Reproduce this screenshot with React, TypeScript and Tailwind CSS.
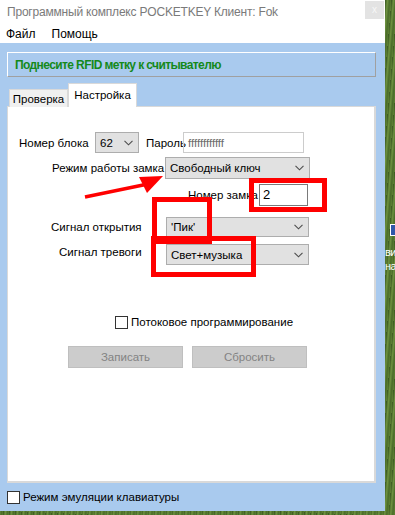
import React from "react";

function Chevron() {
  return (
    <svg width="9" height="6" viewBox="0 0 9 6" className="shrink-0">
      <polyline points="0.5,0.8 4.5,4.8 8.5,0.8" fill="none" stroke="#4d4d4d" strokeWidth="1.1" />
    </svg>
  );
}

function Select({ value, className }: { value: string; className: string }) {
  return (
    <div className={`flex shrink-0 items-center justify-between border border-[#adadad] bg-[#e1e1e1] pl-[4px] pr-[5px] text-black ${className}`}>
      <span className="whitespace-nowrap">{value}</span>
      <Chevron />
    </div>
  );
}

function Box() {
  return <div className="h-[13px] w-[13px] shrink-0 border border-[#333333] bg-white" />;
}

export default function App() {
  return (
    <div className="relative flex h-[515px] w-[395px] overflow-hidden whitespace-nowrap bg-[repeating-linear-gradient(95deg,#3d5c22_0px,#6e9240_2px,#4b6d2a_4px,#5c7f33_6px)] font-['Liberation_Sans',Arial,sans-serif] text-[11.5px] leading-[14px]">
      {/* Window */}
      <div className="flex h-[511px] w-[385px] shrink-0 flex-col bg-[#a9caee]">
        {/* Title bar */}
        <div className="flex h-[23px] items-start bg-white">
          <span className="pl-[7px] pt-[5px] text-[12px] tracking-[-0.2px] text-[#7a7a7a]">Программный комплекс POCKETKEY Клиент: Fok</span>
          <div className="ml-auto mr-[1px] mt-[1px] flex h-[18px] w-[19px] items-center justify-center bg-[#e3e3e3] text-[10px] text-[#f7f7f7]">
            x
          </div>
        </div>
        {/* Menu */}
        <div className="flex h-[20px] items-start gap-[16px] bg-white pl-[6px] pt-[4px] text-[12px] text-black">
          <span>Файл</span>
          <span>Помощь</span>
        </div>

        {/* Body */}
        <div className="flex flex-1 flex-col pl-[7px] pr-[9px] pt-[9px]">
          <div className="flex h-[25px] items-center border border-b-[#a0a0a0] border-l-white border-r-[#a0a0a0] border-t-white pl-[7px] text-[12px] font-bold tracking-[-0.6px] text-[#14891a]">
            Поднесите RFID метку к считывателю
          </div>

          {/* Tabs */}
          <div className="relative z-10 -mb-px mt-[6px] flex h-[24px] items-end">
            <div className="ml-[2px] flex h-[18px] w-[59px] items-center justify-center border border-b-0 border-[#d9d9d9] bg-[#f0f0f0] pt-[1px] text-black">
              Проверка
            </div>
            <div className="flex h-[24px] w-[69px] justify-center border border-b-0 border-[#d9d9d9] bg-white pt-[4px] text-black">
              Настройка
            </div>
          </div>

          {/* Tab panel */}
          <div className="flex h-[377px] flex-col border border-b-2 border-r-2 border-[#d9d9d9] bg-white text-black">
            <div className="mt-[25px] flex h-[21px] items-center pl-[11px]">
              <span className="w-[76px] shrink-0">Номер блока</span>
              <Select value="62" className="h-[21px] w-[44px]" />
              <span className="w-[44px] shrink-0 pl-[7px]">Пароль</span>
              <div className="flex h-[21px] w-[121px] shrink-0 items-center border border-[#cccccc] pl-[4px] text-[#6d6d6d]">
                ffffffffffff
              </div>
            </div>

            <div className="mt-[4px] flex h-[22px] items-center pl-[44px]">
              <span className="w-[113px] shrink-0">Режим работы замка</span>
              <Select value="Свободный ключ" className="h-[22px] w-[145px]" />
            </div>

            <div className="mt-[5px] flex h-[22px] items-center pl-[180px]">
              <span className="w-[71px] shrink-0">Номер замка</span>
              <div className="flex h-[22px] w-[49px] shrink-0 items-center border border-[#7a7a7a] pl-[3px] text-[13px]">2</div>
            </div>

            <div className="mt-[11px] flex h-[20px] items-center pl-[43px]">
              <span className="w-[115px] shrink-0">Сигнал открытия</span>
              <Select value="'Пик'" className="h-[20px] w-[143px]" />
            </div>

            <div className="mt-[7px] flex h-[21px] items-start pl-[51px]">
              <span className="mt-[1px] w-[107px] shrink-0">Сигнал тревоги</span>
              <Select value="Свет+музыка" className="h-[21px] w-[143px]" />
            </div>

            <div className="mt-[50px] flex items-center gap-[3px] pl-[107px]">
              <Box />
              <span>Потоковое программирование</span>
            </div>

            <div className="mt-[17px] flex gap-[9px] pl-[60px]">
              <div className="flex h-[22px] w-[115px] items-center justify-center border border-[#bfbfbf] bg-[#cccccc] text-[#838383]">
                Записать
              </div>
              <div className="flex h-[22px] w-[115px] items-center justify-center border border-[#bfbfbf] bg-[#cccccc] text-[#838383]">
                Сбросить
              </div>
            </div>
          </div>

          <div className="mt-[7px] flex items-center gap-[3px]">
            <Box />
            <span className="text-black">Режим эмуляции клавиатуры</span>
          </div>
        </div>
      </div>

      {/* Desktop behind */}
      <div className="flex flex-1 flex-col overflow-hidden text-white">
        <div className="ml-[5px] mt-[224px] h-[12px] w-[8px] shrink-0 border border-white bg-[#2f58a8]" />
        <span className="mt-[9px] text-[11px] leading-[14px] tracking-[-0.5px]">ви</span>
        <span className="text-[11px] leading-[14px] tracking-[-0.5px]">на</span>
      </div>

      {/* Red annotations */}
      <div className="absolute left-[249px] top-[178px] h-[34px] w-[78px] border-[5px] border-[#ff0000]" />
      <div className="absolute left-[152px] top-[197px] h-[47px] w-[60px] border-[5px] border-[#ff0000]" />
      <div className="absolute left-[151px] top-[236px] h-[41px] w-[105px] border-[5px] border-[#ff0000]" />
      <svg className="absolute left-0 top-0" width="395" height="515" viewBox="0 0 395 515">
        <line x1="85" y1="197" x2="148" y2="184" stroke="#ff0000" strokeWidth="3.5" />
        <polygon points="163,176 139,177 147,193" fill="#ff0000" />
      </svg>
    </div>
  );
}
